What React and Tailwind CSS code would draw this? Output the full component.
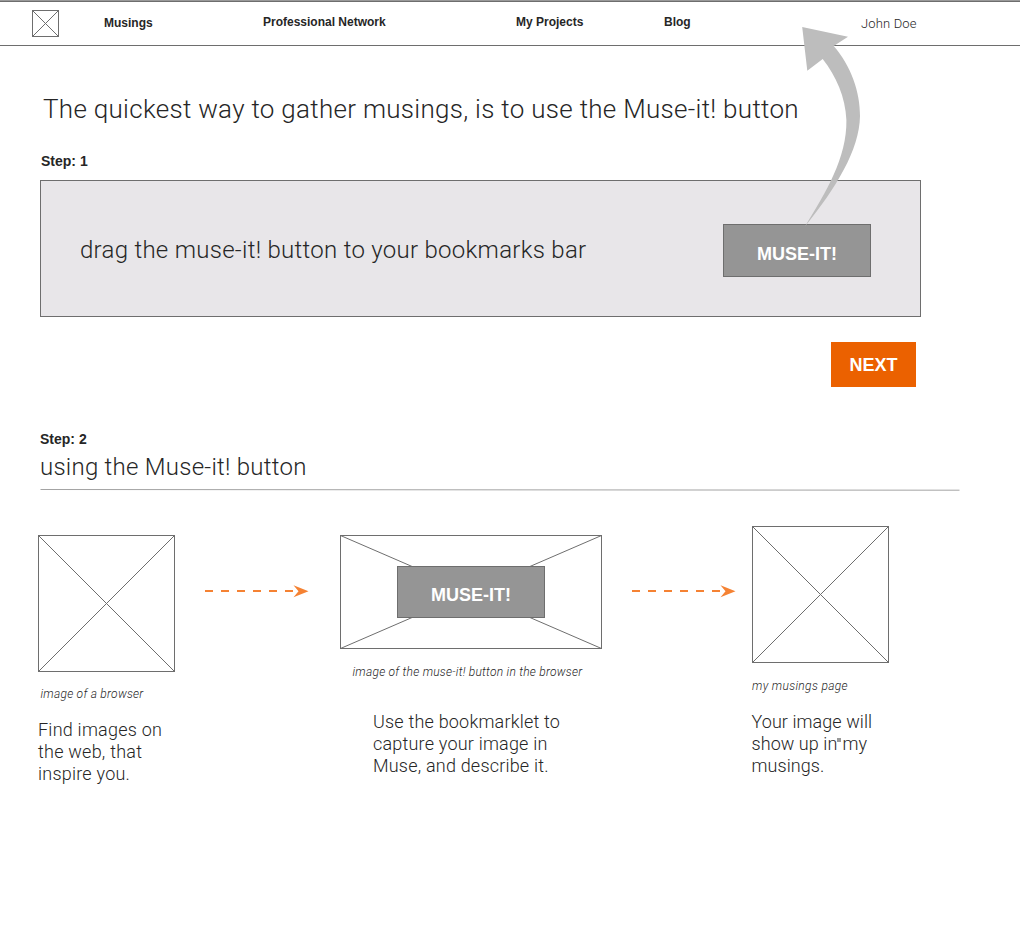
function CrossBox({ width, height, className = "", children }) {
  return (
    <div className={"grid shrink-0 place-items-center " + className}>
      <svg
        width={width}
        height={height}
        viewBox={`0 0 ${width} ${height}`}
        fill="none"
        stroke="#6e6e6e"
        className="col-start-1 row-start-1"
      >
        <rect x="0.5" y="0.5" width={width - 1} height={height - 1} fill="#fff" />
        <path d={`M0.5 0.5L${width - 0.5} ${height - 0.5}M${width - 0.5} 0.5L0.5 ${height - 0.5}`} />
      </svg>
      {children}
    </div>
  );
}

function MuseButton({ className = "" }) {
  return (
    <button
      className={
        "w-[148px] border border-[#6e6e6e] bg-[#959595] text-[18px] leading-5 font-bold text-white " +
        className
      }
    >
      MUSE-IT!
    </button>
  );
}

function DashedArrow({ className = "" }) {
  return (
    <svg width="105" height="14" viewBox="0 0 105 14" className={"shrink-0 " + className}>
      <path d="M0 7H96" stroke="#f58233" strokeWidth="2" strokeDasharray="8 8" />
      <path d="M103.5 7.2L88.5 1.2L93.5 7.2L88.5 13.2Z" fill="#f58233" />
    </svg>
  );
}

function Caption({ className = "", children }) {
  return (
    <p
      className={
        "font-['Roboto'] text-[12px] leading-4 font-light whitespace-nowrap italic " + className
      }
    >
      {children}
    </p>
  );
}

function Blurb({ className = "", children }) {
  return (
    <p
      className={
        "font-['Roboto'] text-[18px] leading-[22px] font-light whitespace-nowrap " + className
      }
    >
      {children}
    </p>
  );
}

export default function App() {
  return (
    <div className="relative h-[929px] w-[1020px] overflow-hidden bg-white font-['Liberation_Sans',sans-serif] text-[#262626]">
      <header className="flex h-[46px] items-start border-t border-b border-t-[#999] border-b-[#6e6e6e]">
        <div className="flex h-full w-full border-t border-[#6e6e6e] pl-8">
          <CrossBox width={27} height={27} className="mt-2 h-[27px]" />
          <nav className="flex pt-3 text-[12px] leading-4 font-bold whitespace-nowrap">
            <a className="ml-[45px] w-[159px] pt-px">Musings</a>
            <a className="w-[253px]">Professional Network</a>
            <a className="w-[148px]">My Projects</a>
            <a className="w-[197px]">Blog</a>
          </nav>
          <span className="pt-3 font-['Roboto'] text-[13px] leading-5 font-light tracking-[0.15px]">
            John Doe
          </span>
        </div>
      </header>

      <main className="pl-10">
        <h1 className="mt-[47px] ml-[3px] font-['Roboto'] text-[26px] leading-8 font-light tracking-[0.29px] whitespace-nowrap">
          The quickest way to gather musings, is to use the Muse-it! button
        </h1>

        <section className="w-[881px]">
          <h2 className="mt-[26px] ml-px text-[14px] leading-5 font-bold">Step: 1</h2>
          <div className="mt-[9px] flex h-[137px] justify-between border border-[#6e6e6e] bg-[#e8e6e9] pr-[49px] pl-[39px]">
            <p className="mt-[53px] font-['Roboto'] text-[24px] leading-8 font-light tracking-[0.28px]">
              drag the muse-it! button to your bookmarks bar
            </p>
            <MuseButton className="mt-[43px] h-[53px] pt-[7px]" />
          </div>
          <div className="mt-[25px] flex justify-end pr-[5px]">
            <button className="h-[45px] w-[85px] bg-[#eb6100] text-[18px] leading-5 font-bold text-white">
              NEXT
            </button>
          </div>
        </section>

        <section className="mt-[42px]">
          <h2 className="text-[14px] leading-5 font-bold">Step: 2</h2>
          <p className="mt-[2px] font-['Roboto'] text-[24px] leading-8 font-light tracking-[0.25px]">
            using the Muse-it! button
          </p>
          <svg width="920" height="3" viewBox="0 0 920 3" className="mt-[5px] block">
            <path d="M0.5 1.5L919.5 2.2" stroke="#a3a3a3" />
          </svg>

          <div className="mt-[35px] -ml-[2px] flex items-start">
            <figure className="mt-[9px] w-[167px]">
              <CrossBox width={137} height={137} className="w-[137px]" />
              <Caption className="mt-[14px] ml-[2.5px] tracking-[0.26px]">image of a browser</Caption>
              <Blurb className="mt-[17px] tracking-[0.23px]">
                Find images on
                <br />
                the web, that
                <br />
                inspire you.
              </Blurb>
            </figure>
            <DashedArrow className="mt-[58px]" />
            <figure className="mt-[9px] ml-[30px] w-[262px]">
              <CrossBox width={262} height={114}>
                <MuseButton className="col-start-1 row-start-1 h-[52px] pt-[5px]" />
              </CrossBox>
              <Caption className="mt-[15px] ml-[12.5px] tracking-[0.25px]">
                image of the muse-it! button in the browser
              </Caption>
              <Blurb className="mt-[31px] ml-[33px] tracking-[0.2px]">
                Use the bookmarklet to
                <br />
                capture your image in
                <br />
                Muse, and describe it.
              </Blurb>
            </figure>
            <DashedArrow className="mt-[58px] ml-[30px]" />
            <figure className="ml-[15px] w-[137px]">
              <CrossBox width={137} height={137} />
              <Caption className="mt-[15px] tracking-[0.34px]">my musings page</Caption>
              <Blurb className="mt-[17px] -ml-[0.5px] tracking-[0.06px]">
                Your image will
                <br />
                show up in
                <span className="mr-px inline-block size-1 -translate-y-2 bg-[#999]" />
                my
                <br />
                musings.
              </Blurb>
            </figure>
          </div>
        </section>
      </main>

      <svg
        width="60"
        height="202"
        viewBox="802 26 60 202"
        className="pointer-events-none absolute top-[26px] left-[802px]"
      >
        <path
          d="M802.2 27L848 36.7L833.7 46C851 66 860.2 92 860 116C859.5 150 836 188 804.8 226.8C826 192 847 158 846.4 120C845.5 97 836 76 822.7 59L807.3 70.8Z"
          fill="#bdbdbd"
        />
      </svg>
    </div>
  );
}
